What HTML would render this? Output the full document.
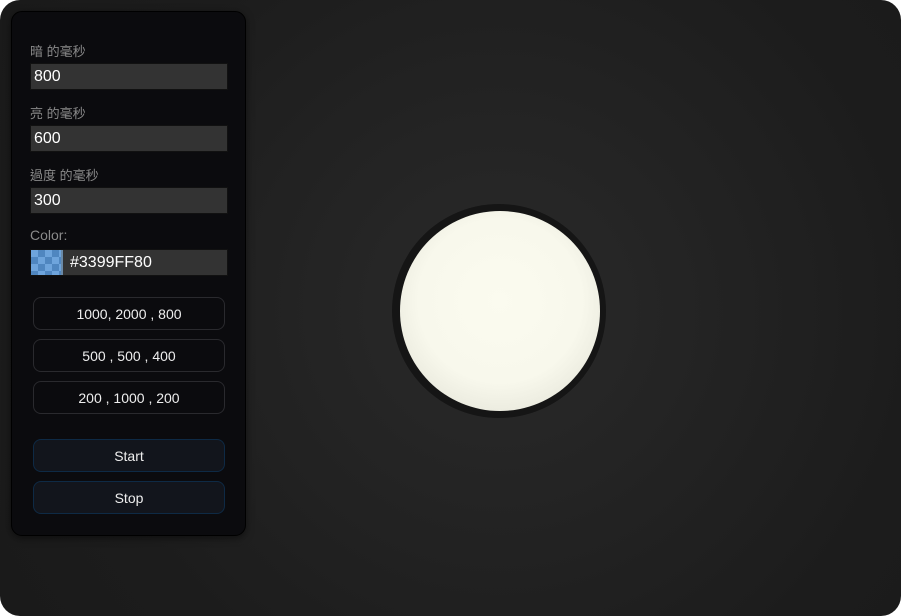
<!DOCTYPE html>
<html><head><meta charset="utf-8"><style>
html,body{margin:0;padding:0;background:#fff;width:901px;height:616px;overflow:hidden}
.main{position:absolute;left:0;top:0;width:901px;height:616px;border-radius:20px;background:radial-gradient(circle at 499px 311px,#2a2a2a 0,#1c1c1c 420px,#1a1a1a 100%);}
.panel{position:absolute;left:11px;top:11px;width:233px;height:523px;background:#0b0b0e;border:1px solid #000;border-radius:11px;box-shadow:0 2px 8px rgba(0,0,0,.5)}
.lbl{position:absolute;left:18px;font:13px "Liberation Sans","Noto Sans CJK TC",sans-serif;color:#8a8a8a}
.inp{position:absolute;left:18px;width:196px;height:25px;background:#333;border:1px solid #111;color:#fff;font:16px "Liberation Sans",sans-serif;line-height:25px;box-sizing:content-box}
.inp span{padding-left:3px}
.btn{position:absolute;left:21px;width:190px;height:31px;border:1px solid #2a2a2e;border-radius:8px;color:#eee;font:14px "Liberation Sans",sans-serif;text-align:center;line-height:33px}
.b2{background:#12151c;border-color:#0e2a45}
.ring{position:absolute;left:392px;top:204px;width:214px;height:214px;border-radius:50%;background:#151515}
.bulb{position:absolute;left:400px;top:211px;width:200px;height:200px;border-radius:50%;background:radial-gradient(circle at 50% 45%,#fbfbef 0,#f8f8ec 55%,#dcdcd0 100%)}
</style></head><body>
<div class="main">
<div class="panel">
<div class="lbl" style="top:29px">暗 的毫秒</div>
<div class="inp" style="top:51px"><span>800</span></div>
<div class="lbl" style="top:91px">亮 的毫秒</div>
<div class="inp" style="top:113px"><span>600</span></div>
<div class="lbl" style="top:153px">過度 的毫秒</div>
<div class="inp" style="top:175px"><span>300</span></div>
<div class="lbl" style="top:215px;font-size:14px">Color:</div>
<div class="inp" style="top:237px"><div style="position:absolute;left:0;top:0;width:30px;height:25px;background:repeating-conic-gradient(#4f86c0 0 25%,#6ea4dc 0 50%) 0 0/14px 14px;border-right:2px solid #6a8aa8"></div><span style="position:absolute;left:36px">#3399FF80</span></div>
<div class="btn" style="top:285px">1000, 2000 , 800</div>
<div class="btn" style="top:327px">500 , 500 , 400</div>
<div class="btn" style="top:369px">200 , 1000 , 200</div>
<div class="btn b2" style="top:427px">Start</div>
<div class="btn b2" style="top:469px">Stop</div>
</div>
<div class="ring"></div>
<div class="bulb"></div>
</div>
</body></html>
